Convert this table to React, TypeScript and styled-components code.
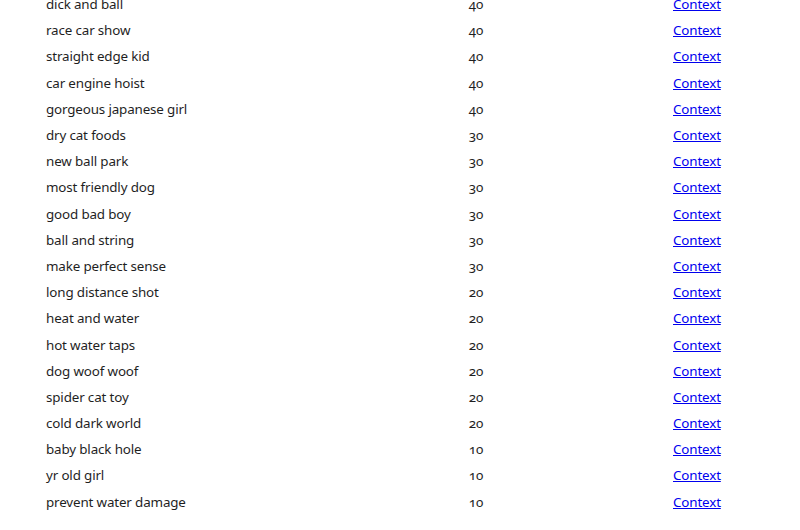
import React from "react";
import styled, { createGlobalStyle } from "styled-components";

const Global = createGlobalStyle`
  html, body { margin: 0; padding: 0; background: #fff; }
  body { font-family: "Noto Sans", "Open Sans", sans-serif; color: #1f1f1f; overflow: hidden; }
`;

const rows: [string, number][] = [
  ["dick and ball", 40],
  ["race car show", 40],
  ["straight edge kid", 40],
  ["car engine hoist", 40],
  ["gorgeous japanese girl", 40],
  ["dry cat foods", 30],
  ["new ball park", 30],
  ["most friendly dog", 30],
  ["good bad boy", 30],
  ["ball and string", 30],
  ["make perfect sense", 30],
  ["long distance shot", 20],
  ["heat and water", 20],
  ["hot water taps", 20],
  ["dog woof woof", 20],
  ["spider cat toy", 20],
  ["cold dark world", 20],
  ["baby black hole", 10],
  ["yr old girl", 10],
  ["prevent water damage", 10],
];

const Table = styled.table`
  border-collapse: collapse;
  table-layout: fixed;
  margin: -9px 0 0 46px;
  width: 747px;
  font-size: 13.4px;
  letter-spacing: -0.15px;
  font-variant-numeric: oldstyle-nums;
`;

const Row = styled.tr`
  height: 26.2px;
`;

const Cell = styled.td<{ $w: number; $align?: string }>`
  padding: 0;
  width: ${(p) => p.$w}px;
  text-align: ${(p) => p.$align || "left"};
  vertical-align: middle;
  line-height: 26px;
  white-space: nowrap;
`;

const Link = styled.a`
  color: #0000ee;
  text-decoration: underline;
`;

export default function App() {
  return (
    <>
      <Global />
      <Table>
        <tbody>
          {rows.map(([t, n]) => (
            <Row key={t}>
              <Cell $w={233}>{t}</Cell>
              <Cell $w={394} $align="center">{n}</Cell>
              <Cell $w={120}>
                <Link href="#">Context</Link>
              </Cell>
            </Row>
          ))}
        </tbody>
      </Table>
    </>
  );
}
